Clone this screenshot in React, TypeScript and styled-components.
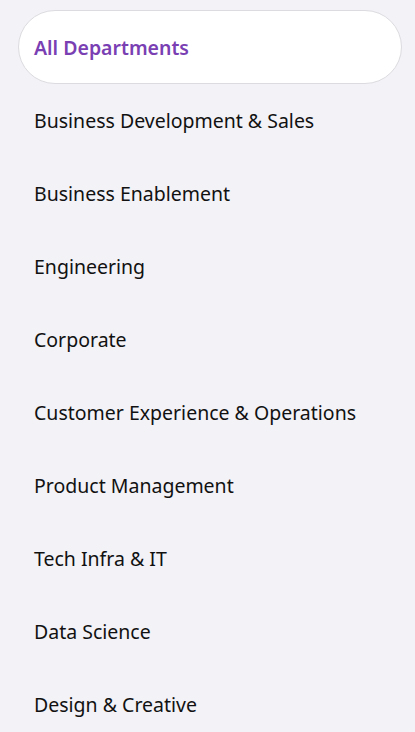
import React from "react";
import styled, { createGlobalStyle } from "styled-components";

const Global = createGlobalStyle`
  html, body {
    margin: 0;
    padding: 0;
    background: #f3f2f7;
  }
  body {
    font-family: "Noto Sans", "Open Sans", sans-serif;
    -webkit-font-smoothing: antialiased;
  }
`;

const List = styled.ul`
  list-style: none;
  margin: 0;
  padding: 10px 13px 0 18px;
  display: flex;
  flex-direction: column;
`;

const Item = styled.li<{ $active?: boolean }>`
  box-sizing: border-box;
  height: ${(p) => (p.$active ? "74px" : "73px")};
  display: flex;
  align-items: center;
  padding-left: ${(p) => (p.$active ? "15px" : "16px")};
  border-radius: 37px;
  background: ${(p) => (p.$active ? "#ffffff" : "transparent")};
  border: ${(p) => (p.$active ? "1px solid #dcdce0" : "none")};
  color: ${(p) => (p.$active ? "#7a3fb3" : "#111111")};
  font-size: 19.5px;
  font-weight: ${(p) => (p.$active ? 600 : 400)};
  letter-spacing: 0;
  white-space: nowrap;
`;

const departments = [
  "All Departments",
  "Business Development & Sales",
  "Business Enablement",
  "Engineering",
  "Corporate",
  "Customer Experience & Operations",
  "Product Management",
  "Tech Infra & IT",
  "Data Science",
  "Design & Creative",
];

export default function App() {
  return (
    <>
      <Global />
      <List>
        {departments.map((d, i) => (
          <Item key={d} $active={i === 0}>
            {d}
          </Item>
        ))}
      </List>
    </>
  );
}
